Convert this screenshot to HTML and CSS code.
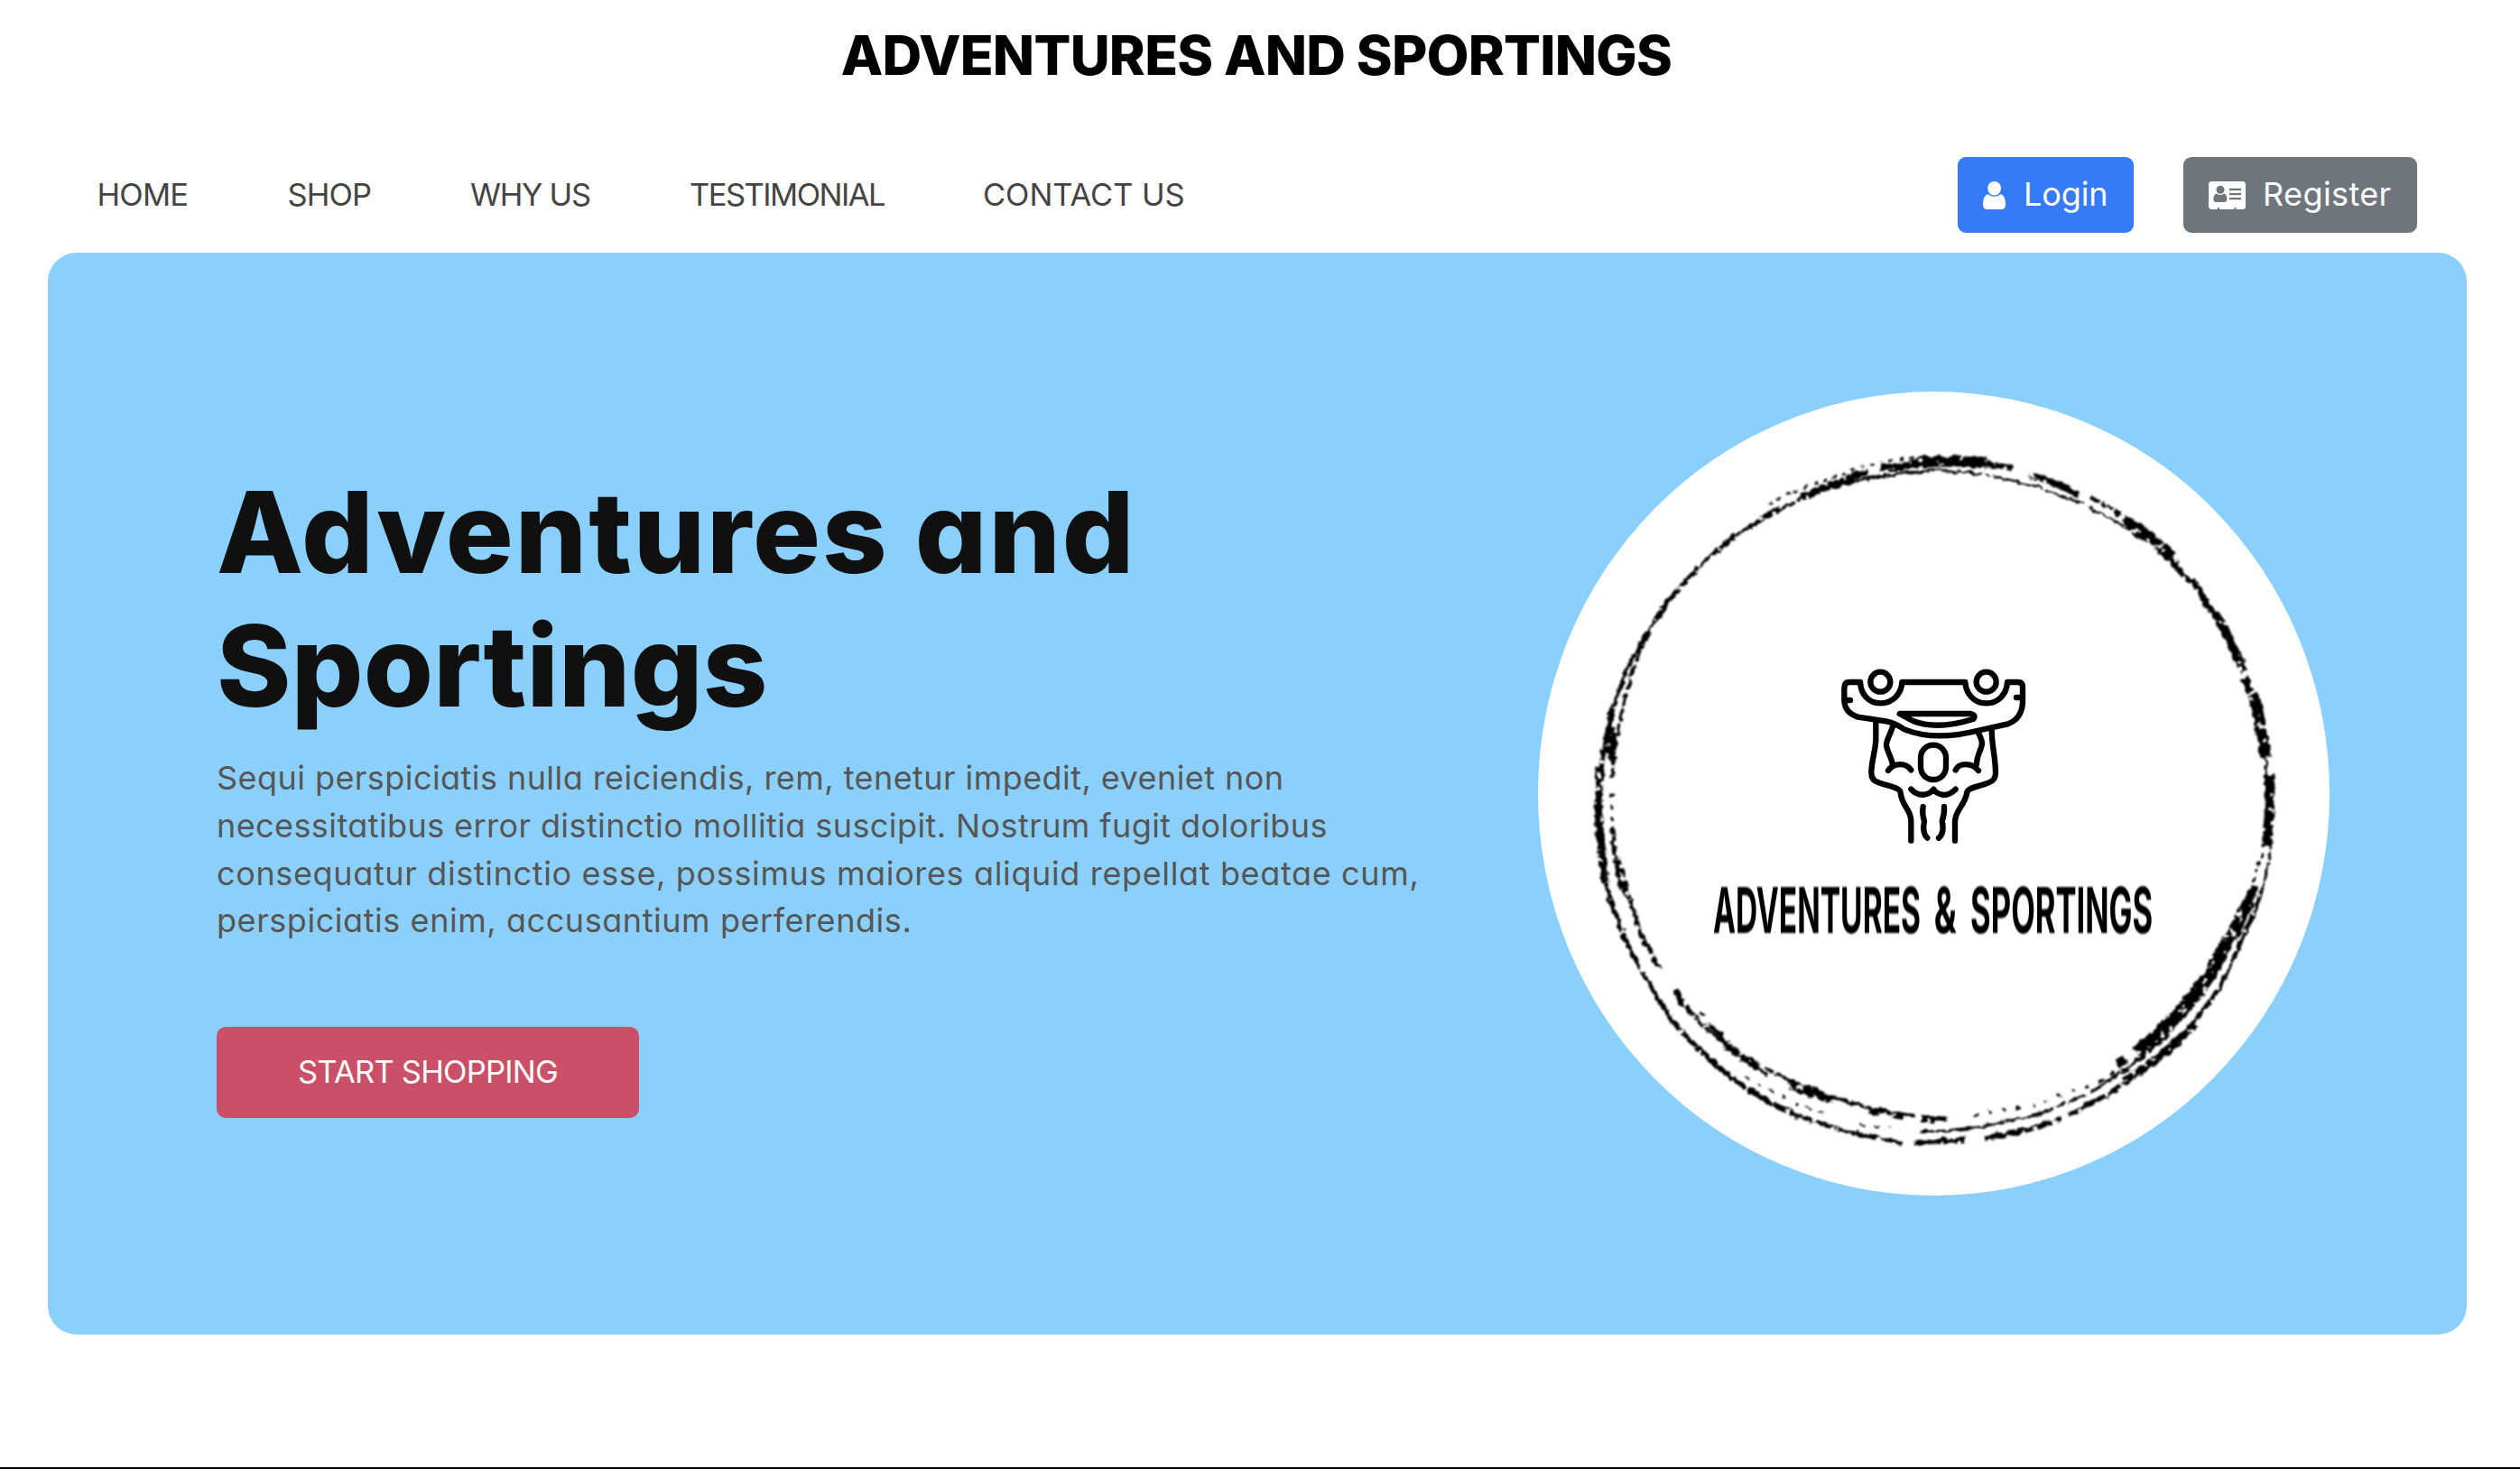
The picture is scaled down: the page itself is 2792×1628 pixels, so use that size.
FILE: index.html
```html
<!DOCTYPE html>
<html lang="en">
<head>
<meta charset="utf-8">
<title>Adventures and Sportings</title>
<link rel="stylesheet" href="styles.css">
</head>
<body>
<header class="brand">ADVENTURES AND SPORTINGS</header>
<nav class="nav">
  <div class="nav-links">
    <a class="link-home">HOME</a>
    <a class="link-shop">SHOP</a>
    <a class="link-why">WHY US</a>
    <a class="link-testimonial">TESTIMONIAL</a>
    <a class="link-contact">CONTACT US</a>
  </div>
  <div class="nav-actions">
    <a class="btn btn-login">
      <svg class="icon-user" viewBox="0 0 25 31"><ellipse cx="12.6" cy="7.7" rx="7.4" ry="7.7"/><path d="M5.6 14.2Q12.6 19.5 19.6 14.2C23.800 15 25 20.500 25 25.500Q25 31 20 31H5Q0 31 0 25.500C0 20.500 1.400 15 5.600 14.200Z"/></svg>
      <span>Login</span>
    </a>
    <a class="btn btn-register">
      <svg class="icon-card" viewBox="0 0 41 31"><path fill-rule="evenodd" d="M3.500 0H37.500Q41 0 41 3.500V27.500Q41 31 37.500 31H30.500V29H28.500V31H12V29H10V31H3.500Q0 31 0 27.500V3.500Q0 0 3.500 0Z"/><g class="cut"><ellipse cx="13" cy="9.300" rx="4.500" ry="4.500"/><path d="M9 13.500Q13 16.500 17 13.500C19.500 14 20.300 17 20.300 20Q20.300 23 17.500 23H8.200Q5.300 23 5.300 20C5.300 17 6.500 14 9 13.500Z"/><rect x="23" y="7.800" width="13" height="2.300"/><rect x="23" y="12.900" width="13" height="2.300"/><rect x="23" y="18" width="13" height="2.300"/></g></svg>
      <span>Register</span>
    </a>
  </div>
</nav>
<main class="hero">
  <section class="copy">
    <h1><span class="h-one">Adventures and</span> <span class="h-two">Sportings</span></h1>
    <p>
      <span class="l-one">Sequi perspiciatis nulla reiciendis, rem, tenetur impedit, eveniet non</span>
      <span class="l-two">necessitatibus error distinctio mollitia suscipit. Nostrum fugit doloribus</span>
      <span class="l-three">consequatur distinctio esse, possimus maiores aliquid repellat beatae cum,</span>
      <span class="l-four">perspiciatis enim, accusantium perferendis.</span>
    </p>
    <a class="cta">START SHOPPING</a>
  </section>
  <svg class="logo" viewBox="1704 434 877 891">
    <defs>
      <filter id="brush" filterUnits="userSpaceOnUse" x="1740" y="480" width="800" height="800" color-interpolation-filters="sRGB">
        <feTurbulence type="fractalNoise" baseFrequency="0.13" numOctaves="2" seed="4" result="n"/>
        <feDisplacementMap in="SourceGraphic" in2="n" scale="7" xChannelSelector="R" yChannelSelector="G" result="d"/>
        <feColorMatrix in="n" type="matrix" values="0 0 0 0 0  0 0 0 0 0  0 0 0 0 0  0 0 14 0 -4.1" result="holes"/>
        <feComposite in="d" in2="holes" operator="in"/>
        <feGaussianBlur stdDeviation="0.9"/>
      </filter>
      <filter id="soft"><feGaussianBlur stdDeviation="0.9"/></filter>
    </defs>
    <ellipse cx="2142.500" cy="879.500" rx="438.500" ry="445.500" fill="#fff"/>
    <g class="ink" filter="url(#brush)" transform="translate(1 1.500)">
      <path stroke-width="3.500" d="M2140 520L2106 523 2073 528 2046 534 2023 541 1995 551 1970 563 1937 582 1916 597 1897 612 1878 630 1860 650 1843 670 1830 690 1816 712 1803 737 1793 763 1785 790"/>
      <path stroke-width="6" d="M1972 562L1955 571 1937 583M1922 592L1897 612M1880 628L1860 650 1845 668 1832 688M1826 698L1812 722"/>
      <path stroke-width="8" d="M2126 511L2104 516 2083 517M2068 522L2053 526 2040 533 2020 539 2005 546 1995 550"/>
      <path stroke-width="3" stroke-dasharray="5 6" d="M2130 505L2100 508 2060 517 2020 531 1990 542 1960 556"/>
      <path stroke-width="12" d="M2122 511L2143 510 2173 510 2200 512"/>
      <path stroke-width="7" d="M2200 512L2228 518M2247 525L2262 529 2280 536 2303 547"/>
      <path stroke-width="2.500" d="M2140 520L2180 522 2207 526 2232 532 2257 538 2307 557M2312 560L2347 578 2373 597"/>
      <path stroke-width="5" stroke-dasharray="12 3" d="M2315 549L2337 562 2355 575"/>
      <path stroke-width="12" d="M2352 574L2367 584 2382 595 2397 608 2404 617"/>
      <path stroke-width="7" d="M2404 617L2420 638 2430 645 2437 654 2443 667 2455 684"/>
      <path stroke-width="10" d="M2453 678L2462 693 2470 710 2478 728 2486 743M2486 750L2493 765"/>
      <path stroke-width="12" d="M2495 768L2500 785 2505 808 2509 838"/>
      <path stroke-width="11" d="M2513 857L2514 880 2513 905 2510 937"/>
      <path stroke-width="3" d="M2508 830L2511 860M2516 915L2514 942 2510 967 2500 1003 2490 1027 2480 1047 2470 1070 2460 1090 2445 1112 2430 1132"/>
      <path stroke-width="5" d="M2505 985L2496 1010 2478 1050M2464 1082L2452 1102 2428 1134"/>
      <path stroke-width="9" d="M2430 1133L2410 1154 2387 1173 2374 1182 2353 1196"/>
      <path stroke-width="5" d="M2387 1173L2365 1189 2340 1208 2318 1220 2290 1235M2282 1239L2257 1247"/>
      <path stroke-width="6" d="M2257 1247L2232 1254 2207 1258 2198 1260M2176 1262L2140 1264"/>
      <path stroke-width="4" d="M2140 1264L2119 1265M2107 1265L2085 1261 2066 1257 2047 1253 2018 1244 1990 1235"/>
      <path stroke-width="6" d="M1990 1235L1960 1220 1933 1204 1917 1192 1900 1179 1880 1160 1862 1142"/>
      <path stroke-width="5" d="M1860 1140L1846 1121 1833 1100 1815 1070 1800 1040 1787 1007 1778 977"/>
      <path stroke-width="9" d="M1778 977L1774 945 1771 913 1770 887 1772 850"/>
      <path stroke-width="6" d="M1771 860L1775 835 1780 810 1786 780"/>
      <path stroke-width="8" d="M1784 803L1778 825 1786 834M1786 810L1785 840"/>
      <path stroke-width="4" stroke-dasharray="14 3" d="M1823 703L1807 745 1797 780 1790 820 1785 860"/>
      <path stroke-width="4" stroke-dasharray="4 9" d="M1785 878L1786 912"/>
      <path stroke-width="5" d="M1786 915L1788 950"/>
      <path stroke-width="10" d="M1790 950L1794 967 1798 983"/>
      <path stroke-width="5" d="M1798 983L1810 1008 1813 1023 1820 1040 1829 1056M1830 1060L1838 1072"/>
      <path stroke-width="7" d="M1855 1095L1862 1108 1873 1121"/>
      <path stroke-width="4" d="M1870 1117L1882 1132 1903 1149 1925 1167 1957 1191M1882 1120L1888 1124M1891 1133L1905 1145 1914 1154"/>
      <path stroke-width="8" d="M1911 1157L1930 1170 1948 1182"/>
      <path stroke-width="4" d="M1956 1183L1990 1200 2015 1209 2040 1218 2073 1227 2095 1232 2120 1235"/>
      <path stroke-width="9" d="M1980 1200L2000 1207 2030 1218"/>
      <path stroke-width="7" d="M2128 1239L2150 1239 2157 1240M2070 1229L2082 1232M2095 1234L2108 1236"/>
      <path stroke-width="2" stroke-dasharray="6 9" d="M1933 1192L1960 1206 1990 1222 2025 1235M2060 1245L2105 1250"/>
      <path stroke-width="4" stroke-dasharray="4 12" d="M2186 1235L2219 1229 2255 1223 2283 1211 2303 1206 2330 1195 2345 1182"/>
      <path stroke-width="3" d="M2125 1252L2150 1252 2190 1248 2243 1237 2268 1230 2290 1220 2318 1208 2340 1193 2360 1180 2380 1163 2402 1146"/>
      <path stroke-width="9" d="M2345 1178L2354 1172"/>
      <path stroke-width="15" d="M2366 1165L2380 1154 2398 1137 2415 1120 2432 1100 2446 1080"/>
      <path stroke-width="14" d="M2446 1082L2456 1062 2466 1042"/>
      <path stroke-width="13" d="M2466 1042L2476 1028 2484 1010 2490 997"/>
      <path stroke-width="8" d="M2488 1000L2498 980"/>
      <path stroke-width="3" stroke-dasharray="5 4" d="M2496 975L2503 950 2508 942"/>
    </g>
    <g class="lifter" filter="url(#soft)" transform="translate(2010 710) scale(.33333)">
      <circle cx="220" cy="137" r="33"/><circle cx="572" cy="137" r="33"/>
      <path d="M153 138H117Q100 138 100 158V200Q102 240 145 254L240 268Q265 272 300 295Q400 335 540 300L640 278Q690 262 693 205V155Q693 138 678 138H642C640 180 610 208 572 208C530 208 504 175 502 138H292C290 178 260 208 220 208C180 208 155 178 153 138"/>
      <path d="M102 198H120M672 189H690M284 243H520Q538 246 530 260Q410 298 330 268Z"/>
      <path d="M205 270V330C203 370 190 400 190 440Q190 465 215 472C240 482 285 488 287 505C290 550 322 560 322 600V665"/>
      <path d="M590 295C590 350 602 380 603 440Q603 465 580 472C550 485 510 488 508 505C500 550 470 560 468 600V665"/>
      <path d="M262 282C255 310 238 330 240 350C245 375 258 390 260 410M246 432C265 405 305 405 322 430M545 305C555 325 562 340 555 355C548 375 540 390 540 410M470 430C482 405 525 405 546 432"/>
      <rect x="354" y="347" width="84" height="115" rx="42"/>
      <path d="M322 494Q340 514 365 512Q388 508 397 494Q405 510 430 513Q452 512 470 494M362 552Q358 575 366 600Q358 640 376 656M432 552Q434 575 425 600Q434 640 414 656"/>
    </g>
    <g class="wordmark" filter="url(#soft)" transform="translate(1898 1034) scale(.48 1)">
      <text x="0" y="0" textLength="479" lengthAdjust="spacingAndGlyphs">ADVENTURES</text>
      <text x="510" y="0" textLength="52" lengthAdjust="spacingAndGlyphs">&amp;</text>
      <text x="594" y="0" textLength="421" lengthAdjust="spacingAndGlyphs">SPORTINGS</text>
    </g>
  </svg>
</main>
<footer class="edge"></footer>
</body>
</html>
```
FILE: styles.css
```css
* { box-sizing: border-box; }
body {
  margin: 0;
  height: 1628px;
  display: flex;
  flex-direction: column;
  overflow: hidden;
  background: #fff;
  font-family: Inter, "Open Sans", sans-serif;
  font-feature-settings: "cv11";
  font-size: 34.5px;
}
.brand {
  height: 152px;
  line-height: 122px;
  padding-right: 8px;
  text-align: center;
  font-size: 60.5px;
  font-weight: 800;
  letter-spacing: -.75px;
  color: #000;
}
.nav {
  height: 128px;
  padding: 0 114px 0 107.5px;
  display: flex;
  align-items: center;
  justify-content: space-between;
  color: #444;
}
.nav-links {
  padding-bottom: 2px;
  display: grid;
  grid-template-columns: 211px 202.5px 243px 325px auto;
  white-space: nowrap;
}
.link-home { letter-spacing: -.8px; }
.link-shop { letter-spacing: -.88px; }
.link-why { letter-spacing: -1.3px; }
.link-testimonial { letter-spacing: -1.53px; }
.link-contact { letter-spacing: -.1px; }
.nav-actions { display: flex; gap: 55px; }
.btn {
  height: 84px;
  padding-left: 28px;
  display: flex;
  align-items: center;
  border-radius: 9px;
  color: #fff;
  font-size: 36px;
}
.btn svg { fill: #fff; flex: none; }
.btn span { padding-bottom: 2px; }
.btn-login { width: 195px; background: #357af6; letter-spacing: -.1px; }
.btn-register { width: 259px; background: #6e757c; letter-spacing: .39px; }
.icon-user { width: 25px; height: 31px; margin-right: 20px; }
.icon-card { width: 41px; height: 31px; margin-right: 19px; }
.icon-card .cut { fill: #6e757c; }
.hero {
  height: 1199px;
  margin: 0 59px 147px 53px;
  padding: 0 152px 0 187px;
  display: flex;
  align-items: center;
  justify-content: space-between;
  flex: none;
  border-radius: 32px;
  background: #8bd0fc;
}
.copy { height: 724px; white-space: nowrap; }
h1 {
  margin: -2px 0 24.7px;
  font-size: 125px;
  line-height: 148px;
  font-weight: 800;
  color: #101010;
}
h1 span, p span { display: block; }
.h-one { letter-spacing: 1.9px; }
.h-two { letter-spacing: .2px; }
p { margin: 0 0 91px; font-size: 36px; line-height: 52.7px; color: #565656; }
.l-one { letter-spacing: .44px; }
.l-two { letter-spacing: .41px; }
.l-three { letter-spacing: .64px; }
.l-four { letter-spacing: .56px; }
.cta {
  width: 468px;
  height: 101px;
  padding-bottom: 2px;
  display: flex;
  align-items: center;
  justify-content: center;
  border-radius: 10px;
  background: #c95066;
  color: #fff;
  letter-spacing: -.76px;
}
.logo { width: 877px; height: 891px; flex: none; }
.ink { fill: none; stroke: #000; stroke-linejoin: round; }
.lifter { fill: none; stroke: #000; stroke-width: 19; stroke-linecap: round; stroke-linejoin: round; }
.wordmark { font-size: 70px; font-weight: 700; fill: #000; }
.edge { height: 2px; flex: none; background: #000; }
```
